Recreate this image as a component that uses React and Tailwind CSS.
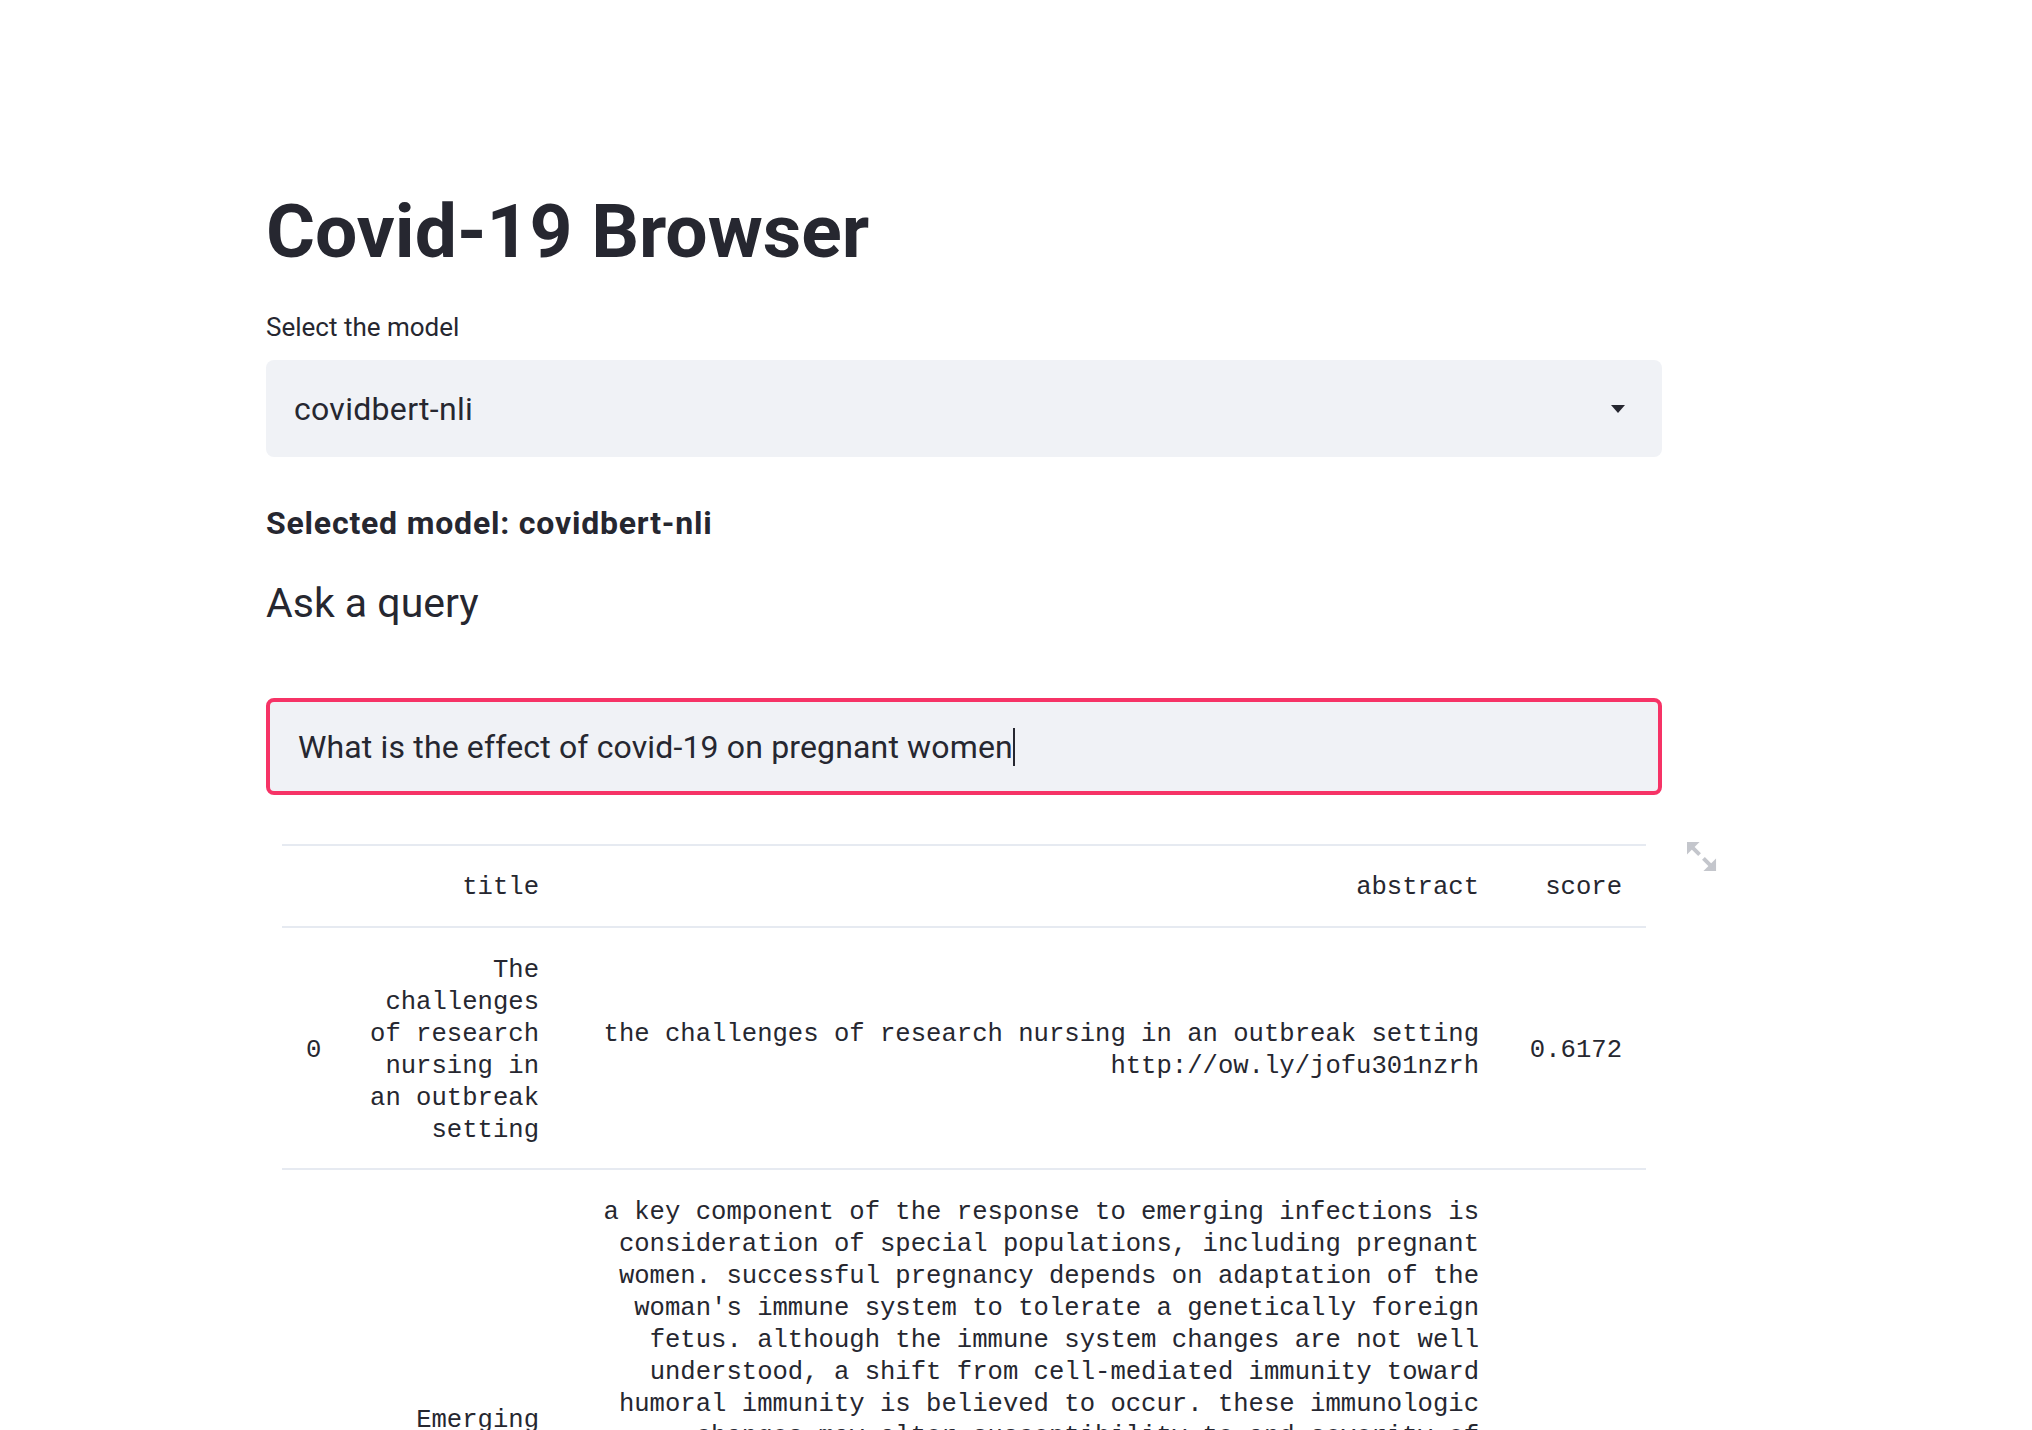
import React from 'react';

const rows = [
    {
        idx: 0,
        title: 'The challenges of research nursing in an outbreak setting',
        abstract: 'the challenges of research nursing in an outbreak setting http://ow.ly/jofu301nzrh',
        score: '0.6172',
    },
    {
        idx: 1,
        title: 'Emerging Infections and Pregnancy',
        abstract:
            "a key component of the response to emerging infections is consideration of special populations, including pregnant women. successful pregnancy depends on adaptation of the woman's immune system to tolerate a genetically foreign fetus. although the immune system changes are not well understood, a shift from cell-mediated immunity toward humoral immunity is believed to occur. these immunologic changes may alter susceptibility to and severity of certain infectious diseases in pregnant women. for example, pregnancy may increase susceptibility to certain intracellular pathogens, including viruses, intracellular bacteria, and parasites. pregnancy may also increase the severity of illness resulting from such infections as influenza and varicella. emerging infections may pose additional risks to the fetus, and their effects on pregnant women are often not recognized. we review these effects.",
        score: '0.6043',
    },
];

function ExpandIcon() {
    return (
        <svg width="31" height="31" viewBox="0 0 32 32" fill="#c4c6cc">
            <polygon points="1,1 14,1 1,14" />
            <line x1="5" y1="5" x2="14" y2="14" stroke="#c4c6cc" strokeWidth="4" />
            <polygon points="31,31 18,31 31,18" />
            <line x1="27" y1="27" x2="18" y2="18" stroke="#c4c6cc" strokeWidth="4" />
        </svg>
    );
}

export default function App() {
    return (
        <div className="min-h-screen bg-white text-[#262730] font-['Roboto',sans-serif]">
            <div className="pl-[266px] pt-[185px] w-[1662px]">
                <h1 className="text-[75px] leading-[92px] font-bold">Covid-19 Browser</h1>

                <label className="block mt-[32px] text-[26px] leading-[36px]">Select the model</label>
                <div className="mt-[15px] h-[97px] rounded-lg bg-[#f0f2f6] flex items-center justify-between pl-[28px] pr-[37px]">
                    <span className="text-[32px] tracking-[0.3px]">covidbert-nli</span>
                    <svg width="14" height="8" viewBox="0 0 14 8">
                        <polygon points="0,0 14,0 7,8" fill="#262730" />
                    </svg>
                </div>

                <p className="mt-[46px] text-[32px] leading-[40px] font-bold tracking-[0.8px]">Selected model: covidbert-nli</p>

                <h3 className="mt-[34px] text-[41px] leading-[52px] font-normal">Ask a query</h3>

                <div className="mt-[69px] h-[97px] rounded-lg border-4 border-[#f63366] bg-[#f0f2f6] flex items-center pl-[28px]">
                    <span className="text-[32px] tracking-[0.15px]">What is the effect of covid-19 on pregnant women</span>
                    <span className="inline-block w-[2px] h-[38px] bg-[#262730]" />
                </div>

                <div className="relative mt-[49px] mx-[16px]">
                    <div className="absolute top-[-3px] right-[-71px]">
                        <ExpandIcon />
                    </div>
                    <table className="table-fixed w-[1364px] border-collapse font-['Liberation_Mono',monospace] text-[25.6px] leading-[32px] text-right">
                        <colgroup>
                            <col className="w-[62px]" />
                            <col className="w-[219px]" />
                            <col className="w-[940px]" />
                            <col className="w-[143px]" />
                        </colgroup>
                        <thead>
                            <tr className="border-y-2 border-[#e6eaf1]">
                                <th className="px-6 pt-[26px] pb-[22px] font-normal"></th>
                                <th className="px-6 pt-[26px] pb-[22px] font-normal text-right">title</th>
                                <th className="px-6 pt-[26px] pb-[22px] font-normal text-right">abstract</th>
                                <th className="px-6 pt-[26px] pb-[22px] font-normal text-right">score</th>
                            </tr>
                        </thead>
                        <tbody>
                            {rows.map((r) => (
                                <tr key={r.idx} className="border-b-2 border-[#e6eaf1]">
                                    <td className="px-6 pt-[27px] pb-[21px] text-left align-middle">{r.idx}</td>
                                    <td className="px-6 pt-[27px] pb-[21px] align-middle">{r.title}</td>
                                    <td className="px-6 pt-[27px] pb-[21px] align-middle">{r.abstract}</td>
                                    <td className="px-6 pt-[27px] pb-[21px] align-middle">{r.score}</td>
                                </tr>
                            ))}
                        </tbody>
                    </table>
                </div>
            </div>
        </div>
    );
}
